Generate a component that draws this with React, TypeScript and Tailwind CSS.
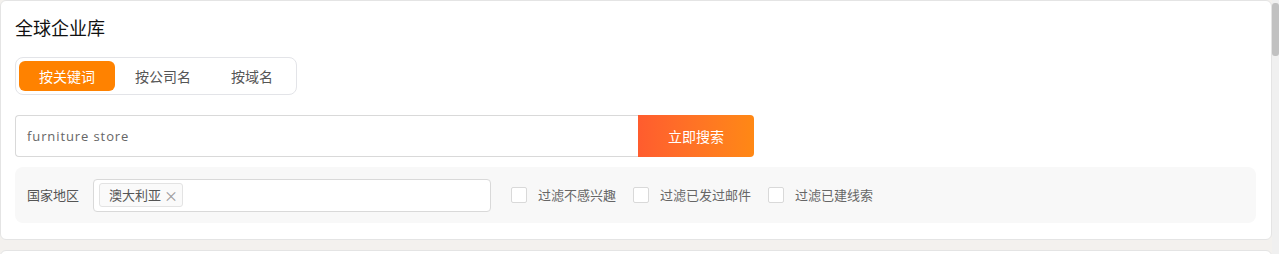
import React, { useState } from 'react';

const FONT = '"Noto Sans CJK SC", "Open Sans", sans-serif';

const tabs = [
  { label: '按关键词', w: 'w-[96px]' },
  { label: '按公司名', w: 'w-[96px]' },
  { label: '按域名', w: 'w-[82px]' },
];

const filters = ['过滤不感兴趣', '过滤已发过邮件', '过滤已建线索'];

export default function App() {
  const [active, setActive] = useState(0);
  const [query, setQuery] = useState('furniture store');
  const [checked, setChecked] = useState<boolean[]>([false, false, false]);

  return (
    <div className="flex h-[254px] w-full overflow-hidden bg-[#f3f1ee]" style={{ fontFamily: FONT }}>
      <div className="flex flex-1 flex-col gap-[10px]">
        <div className="flex h-[240px] shrink-0 flex-col rounded-[6px] border border-[#e4e4e4] bg-white pl-[14px] pr-[15px] pt-[13px]">
          <h1 className="text-[18px] leading-[26px] text-[#111]">全球企业库</h1>

          <div className="mt-[17px] flex h-[38px] w-[282px] items-center rounded-[8px] border border-[#e3e4e8] px-[3px]">
            {tabs.map((t, i) => (
              <button
                key={t.label}
                onClick={() => setActive(i)}
                className={`${t.w} h-[30px] rounded-[6px] text-[14px] ${
                  i === active ? 'bg-[#ff8200] text-white' : 'text-[#555]'
                }`}
              >
                {t.label}
              </button>
            ))}
          </div>

          <div className="mt-[20px] flex h-[42px] w-[739px]">
            <input
              value={query}
              onChange={e => setQuery(e.target.value)}
              className="h-full flex-1 rounded-l-[4px] border border-r-0 border-[#d9d9d9] px-[11px] text-[13px] tracking-[0.9px] text-[#666] outline-none"
              style={{ fontFamily: '"Open Sans", sans-serif' }}
            />
            <button className="h-full w-[116px] rounded-r-[4px] bg-gradient-to-r from-[#ff5c2e] to-[#ff8814] text-[14px] text-white">
              立即搜索
            </button>
          </div>

          <div className="mt-[10px] flex h-[56px] items-center rounded-[8px] bg-[#f8f8f8] px-[12px]">
            <span className="text-[13px] text-[#555]">国家地区</span>
            <div className="ml-[14px] flex h-[33px] w-[398px] items-center rounded-[4px] border border-[#d9d9d9] bg-white px-[5px]">
              <span className="flex h-[24px] items-center gap-[3px] rounded-[3px] border border-[#e3e3e3] bg-[#fafafa] pl-[9px] pr-[4px] text-[13px] text-[#555]">
                澳大利亚
                <span className="text-[14px] leading-none text-[#999]">×</span>
              </span>
            </div>
            <div className="ml-[20px] flex items-center">
              {filters.map((f, i) => (
                <label key={f} className="mr-[17px] flex cursor-pointer items-center">
                  <span
                    onClick={() => setChecked(c => c.map((v, j) => (j === i ? !v : v)))}
                    className={`h-[16px] w-[16px] rounded-[2px] border ${
                      checked[i] ? 'border-[#ff8200] bg-[#ff8200]' : 'border-[#d9d9d9] bg-white'
                    }`}
                  />
                  <span className="ml-[11px] text-[13px] text-[#666]">{f}</span>
                </label>
              ))}
            </div>
          </div>
        </div>
        <div className="h-[40px] shrink-0 rounded-[6px] border border-[#e4e4e4] bg-white" />
      </div>
      <div className="flex w-[7px] shrink-0 flex-col bg-[#f0f0f0] pt-[3px]">
        <div className="h-[53px] w-full rounded-[3px] bg-[#c1c1c1]" />
      </div>
    </div>
  );
}
